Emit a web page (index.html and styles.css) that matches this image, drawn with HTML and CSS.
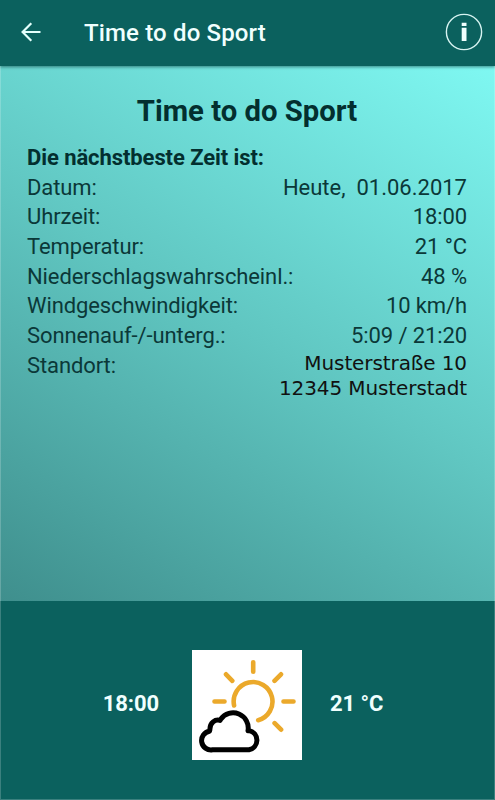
FILE: index.html
```
<!DOCTYPE html>
<html lang="de">
<head>
    <meta charset="UTF-8">
    <meta name="viewport" content="width=device-width, initial-scale=1.0">
    <title>Time to do Sport</title>
    <link rel="stylesheet" href="styles.css">
</head>
<body>
    <div class="app">
        <header class="toolbar">
            <svg class="back" viewBox="0 0 20 20">
                <path d="M19.5 10H2M10.3 1.3L1.6 10l8.7 8.7"/>
            </svg>
            <span class="toolbar-title">Time to do Sport</span>
            <svg class="info" viewBox="0 0 38 38">
                <circle cx="19" cy="19" r="17.6"/>
                <path d="M16.7 9.8h4.8v3.2h-4.8zM16.7 14.8h4.8v13.2h-4.8z"/>
            </svg>
        </header>

        <main class="content">
            <h1>Time to do Sport</h1>
            <h2>Die nächstbeste Zeit ist:</h2>
            <dl class="details">
                <div class="row"><dt>Datum:</dt><dd class="date">Heute,&nbsp; 01.06.2017</dd></div>
                <div class="row"><dt>Uhrzeit:</dt><dd>18:00</dd></div>
                <div class="row"><dt>Temperatur:</dt><dd>21 °C</dd></div>
                <div class="row"><dt>Niederschlagswahrscheinl.:</dt><dd>48 %</dd></div>
                <div class="row"><dt>Windgeschwindigkeit:</dt><dd>10 km/h</dd></div>
                <div class="row"><dt>Sonnenauf-/-unterg.:</dt><dd>5:09 / 21:20</dd></div>
                <div class="row"><dt>Standort:</dt><dd class="address">Musterstraße 10<br>12345 Musterstadt</dd></div>
            </dl>
        </main>

        <footer class="forecast">
            <span class="time">18:00</span>
            <svg class="weather" viewBox="0 0 110 110">
                <g class="sun">
                    <path d="M42.1 55.5A19.4 19.4 0 1 1 66.2 70.2"/>
                    <path d="M61.2 12.2v9.5M34 24.3l6.3 6.5M89 24.3l-6.5 6.5M22.5 51.5h10M91.5 51.5h10M82.6 73.2l6.5 6.5"/>
                </g>
                <path class="cloud" d="M20.5 99.8h36.5a9.8 9.8 0 0 0 .2-19.2l-1.2.2a15.2 15.2 0 0 0-27.3-11.6l-.6 1.2c-4.8-1.6-10.4 2.4-10.2 9.2l-.4 1.6a9.4 9.4 0 0 0 3 18.6z"/>
            </svg>
            <span class="temp">21 °C</span>
        </footer>
    </div>
</body>
</html>
```

FILE: styles.css
```
body {
    margin: 0;
    font-family: Roboto, sans-serif;
    color: #0b3838;
}
.app {
    display: flex;
    flex-direction: column;
    height: 800px;
    position: relative;
}
.app::after {
    content: "";
    position: absolute;
    inset: 0;
    border: 1px solid rgba(255, 255, 255, 0.2);
    pointer-events: none;
}
.toolbar {
    display: flex;
    align-items: center;
    box-sizing: border-box;
    height: 66px;
    padding: 0 12px 2px 21px;
    background: #0b615e;
    color: #f0fffe;
    box-shadow: 0 1px 3px rgba(0, 50, 50, 0.55);
    z-index: 1;
}
.back {
    width: 20px;
    height: 20px;
    fill: none;
    stroke: #e4fffc;
    stroke-width: 2.2;
}
.toolbar-title {
    flex: 1;
    margin-left: 43px;
    padding-top: 2px;
    font-size: 24px;
    font-weight: 500;
    line-height: 30px;
    letter-spacing: 0.15px;
}
.info {
    width: 38px;
    height: 38px;
    fill: #f0fffe;
}
.info circle {
    fill: none;
    stroke: #d6f3f1;
    stroke-width: 1.4;
}
.content {
    flex: 1;
    padding: 0 28px 0 27px;
    background: linear-gradient(31deg, #3f8f8d, #60c6c1 50%, #7ff8f2);
}
h1 {
    margin: 28px 0 0;
    font-size: 29.3px;
    font-weight: 700;
    line-height: 34px;
    text-align: center;
    color: #032f2f;
}
h2 {
    margin: 15px 0 0;
    font-size: 22px;
    font-weight: 700;
    line-height: 29.6px;
    letter-spacing: -0.08px;
    color: #032f2f;
}
.details {
    margin: 0;
    font-size: 22px;
    line-height: 29.7px;
    letter-spacing: -0.1px;
}
.row {
    display: flex;
    justify-content: space-between;
}
dd {
    margin: 0;
    text-align: right;
}
.date {
    letter-spacing: 0;
}
.address {
    font-family: "DejaVu Sans", sans-serif;
    font-size: 20px;
    line-height: 25px;
    color: #111;
}
.forecast {
    display: flex;
    align-items: center;
    justify-content: center;
    box-sizing: border-box;
    height: 199px;
    padding: 8px 9px 0 0;
    background: #0b615e;
    color: #f0fffe;
    font-size: 22px;
    font-weight: 700;
    letter-spacing: -0.1px;
}
.time, .temp {
    padding-bottom: 3px;
}
.weather {
    width: 110px;
    height: 110px;
    margin: 0 28px 0 33px;
    background: #fff;
    fill: none;
    stroke-linecap: round;
    stroke-linejoin: round;
}
.sun {
    stroke: #eba92b;
    stroke-width: 4.6;
}
.cloud {
    stroke: #000;
    stroke-width: 5;
}
```
